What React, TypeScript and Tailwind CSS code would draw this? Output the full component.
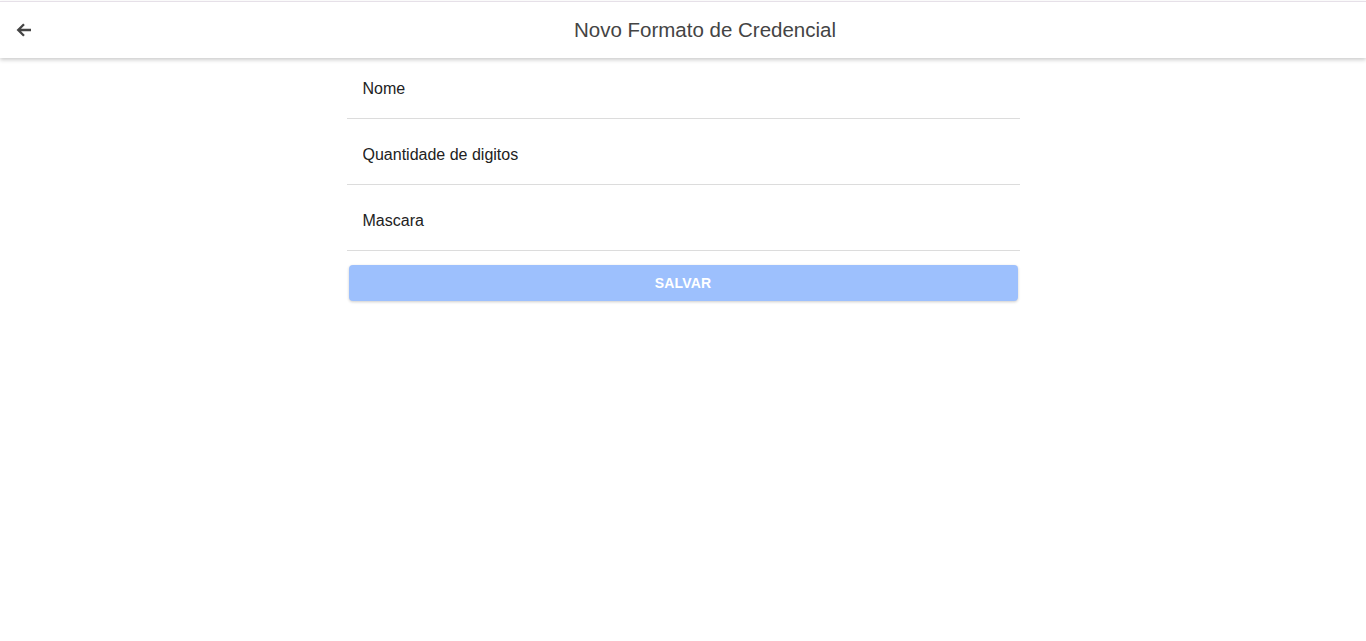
import { useState } from "react";

const FIELDS = [
  { key: "nome", label: "Nome" },
  { key: "digitos", label: "Quantidade de digitos" },
  { key: "mascara", label: "Mascara" },
];

export default function App() {
  const [values, setValues] = useState<Record<string, string>>({});

  return (
    <div className="min-h-[641px] bg-white pt-px font-['Liberation_Sans',Arial,sans-serif]">
      <header className="relative z-10 flex h-[57px] items-center border-t border-[#e6e0e8] bg-white shadow-[0_2px_4px_rgba(0,0,0,0.2)]">
        <button className="ml-4 flex h-6 w-4 items-center justify-center text-[#444]">
          <svg viewBox="0 0 16 14" className="h-[14px] w-4" fill="none" stroke="currentColor" strokeWidth="2.3">
            <path d="M8 1.2L2.2 7l5.8 5.8M2.2 7H15" />
          </svg>
        </button>
        <h1 className="absolute left-1/2 -translate-x-1/2 pl-[44px] text-[20.5px] text-[#444]">
          Novo Formato de Credencial
        </h1>
      </header>

      <form className="mx-auto w-[673px]" onSubmit={(e) => e.preventDefault()}>
        {FIELDS.map((f, i) => (
          <div
            key={f.key}
            className={
              "flex items-end border-b border-[#dcdcdc] px-4 pb-[20px] " +
              (i === 0 ? "h-[61px]" : "h-[66px]")
            }
          >
            <input
              value={values[f.key] ?? ""}
              onChange={(e) => setValues({ ...values, [f.key]: e.target.value })}
              placeholder={f.label}
              className="w-full bg-transparent text-[16px] leading-[18px] text-[#222] outline-none placeholder:text-[#222]"
            />
          </div>
        ))}
        <div className="px-[2px] pt-[14px]">
          <button
            type="submit"
            className="h-9 w-full rounded bg-[#9dc0fd] text-[14px] font-bold tracking-[0.2px] text-white shadow-[0_1px_3px_rgba(0,0,0,0.2)]"
          >
            SALVAR
          </button>
        </div>
      </form>
    </div>
  );
}
